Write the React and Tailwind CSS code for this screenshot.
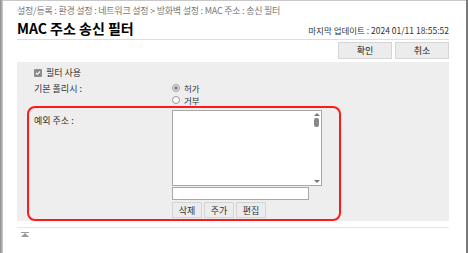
const font = { fontFamily: '"Noto Sans CJK KR", "Liberation Sans", sans-serif' };

const SmallBtn = ({ children }) => (
    <button className="h-[16px] w-[30px] border border-[#d4d4d4] bg-[#ececec] text-[9px] leading-none text-[#333]">
        {children}
    </button>
);

const App = () => {
    return (
        <div className="w-[468px] h-[253px] bg-white overflow-hidden flex" style={font}>
            <div className="w-[3px] bg-gradient-to-r from-[#8a8a8a] to-[#d0d0d0]" />
            <div className="flex-1 border-t border-[#c8c8c8] pl-[14px] pr-[17px] pt-[4px]">
                <div className="text-[9px] leading-[12px] text-[#777] tracking-tight">
                    설정/등록 : 환경 설정 : 네트워크 설정 &gt; 방화벽 설정 : MAC 주소 : 송신 필터
                </div>
                <div className="mt-[2px] flex items-end justify-between border-b border-[#dddddd] pb-[2px]">
                    <h1 className="text-[14px] font-bold leading-[18px] text-black">MAC 주소 송신 필터</h1>
                    <span className="text-[8.5px] leading-[12px] text-[#333] pb-[1px]">마지막 업데이트 : 2024 01/11 18:55:52</span>
                </div>
                <div className="mt-[2px] flex justify-end gap-[3px]">
                    <button className="h-[17px] w-[54px] border border-[#d6d6d6] bg-[#ececec] text-[9px] text-[#222]">확인</button>
                    <button className="h-[17px] w-[54px] border border-[#d6d6d6] bg-[#ececec] text-[9px] text-[#222]">취소</button>
                </div>
                <div className="mt-[3px] bg-[#eeeeee] pt-[5px] pl-[10px] pb-0 h-[159px]">
                    <div className="flex items-center gap-[4px] pl-[7px] h-[12px]">
                        <span className="w-[8px] h-[8px] bg-[#8c8c8c] rounded-[1px] flex items-center justify-center">
                            <svg width="6" height="6" viewBox="0 0 6 6"><path d="M1 3l1.3 1.3L5 1.5" stroke="white" strokeWidth="1.1" fill="none" /></svg>
                        </span>
                        <span className="text-[9px] leading-[12px] text-[#333]">필터 사용</span>
                    </div>
                    <div className="flex mt-[3px] pl-[7px]">
                        <span className="w-[138px] text-[9px] text-[#333] leading-[12px] pt-[1px]">기본 폴리시 :</span>
                        <div className="flex flex-col">
                            <label className="flex items-center gap-[4px] h-[12px]">
                                <span className="w-[8px] h-[8px] rounded-full border border-[#999] bg-[#f4f4f4] flex items-center justify-center">
                                    <span className="w-[4px] h-[4px] rounded-full bg-[#888]" />
                                </span>
                                <span className="text-[8.5px] leading-[12px] text-[#333]">허가</span>
                            </label>
                            <label className="flex items-center gap-[4px] h-[12px]">
                                <span className="w-[8px] h-[8px] rounded-full border border-[#999] bg-white" />
                                <span className="text-[8.5px] leading-[12px] text-[#333]">거부</span>
                            </label>
                        </div>
                    </div>
                    <div className="w-[314px] h-[115px] border-2 border-[#ff1a1a] rounded-[8px] flex pt-[2px] pl-[5px]">
                        <span className="w-[138px] text-[9px] leading-[12px] text-[#333] pt-[5px]">예외 주소 :</span>
                        <div className="flex flex-col">
                            <div className="w-[150px] h-[76px] border border-[#a8a8a8] bg-white flex justify-end">
                                <div className="w-[9px] flex flex-col items-center pt-[2px]">
                                    <span className="w-0 h-0 border-l-[3px] border-r-[3px] border-b-[3px] border-l-transparent border-r-transparent border-b-[#777]" />
                                    <span className="mt-[2px] w-[5px] h-[9px] rounded-[2px] bg-[#888]" />
                                    <span className="mt-auto mb-[2px] w-0 h-0 border-l-[3px] border-r-[3px] border-t-[3px] border-l-transparent border-r-transparent border-t-[#777]" />
                                </div>
                            </div>
                            <div className="mt-[1px] w-[137px] h-[13px] border border-[#a8a8a8] bg-white" />
                            <div className="mt-[2px] flex gap-[2px]">
                                <SmallBtn>삭제</SmallBtn>
                                <SmallBtn>주가</SmallBtn>
                                <SmallBtn>편집</SmallBtn>
                            </div>
                        </div>
                    </div>
                </div>
                <div className="mt-[6px] border-t border-[#e6e6e6] pt-[4px] pl-[3px]">
                    <div className="flex flex-col items-center w-[9px]">
                        <span className="w-[8px] h-[1px] bg-[#999]" />
                        <span className="w-0 h-0 border-l-[4px] border-r-[4px] border-b-[4px] border-l-transparent border-r-transparent border-b-[#999]" />
                    </div>
                </div>
            </div>
            <div className="w-[2px] bg-[#7a7a7a]" />
        </div>
    );
};

export default App;
